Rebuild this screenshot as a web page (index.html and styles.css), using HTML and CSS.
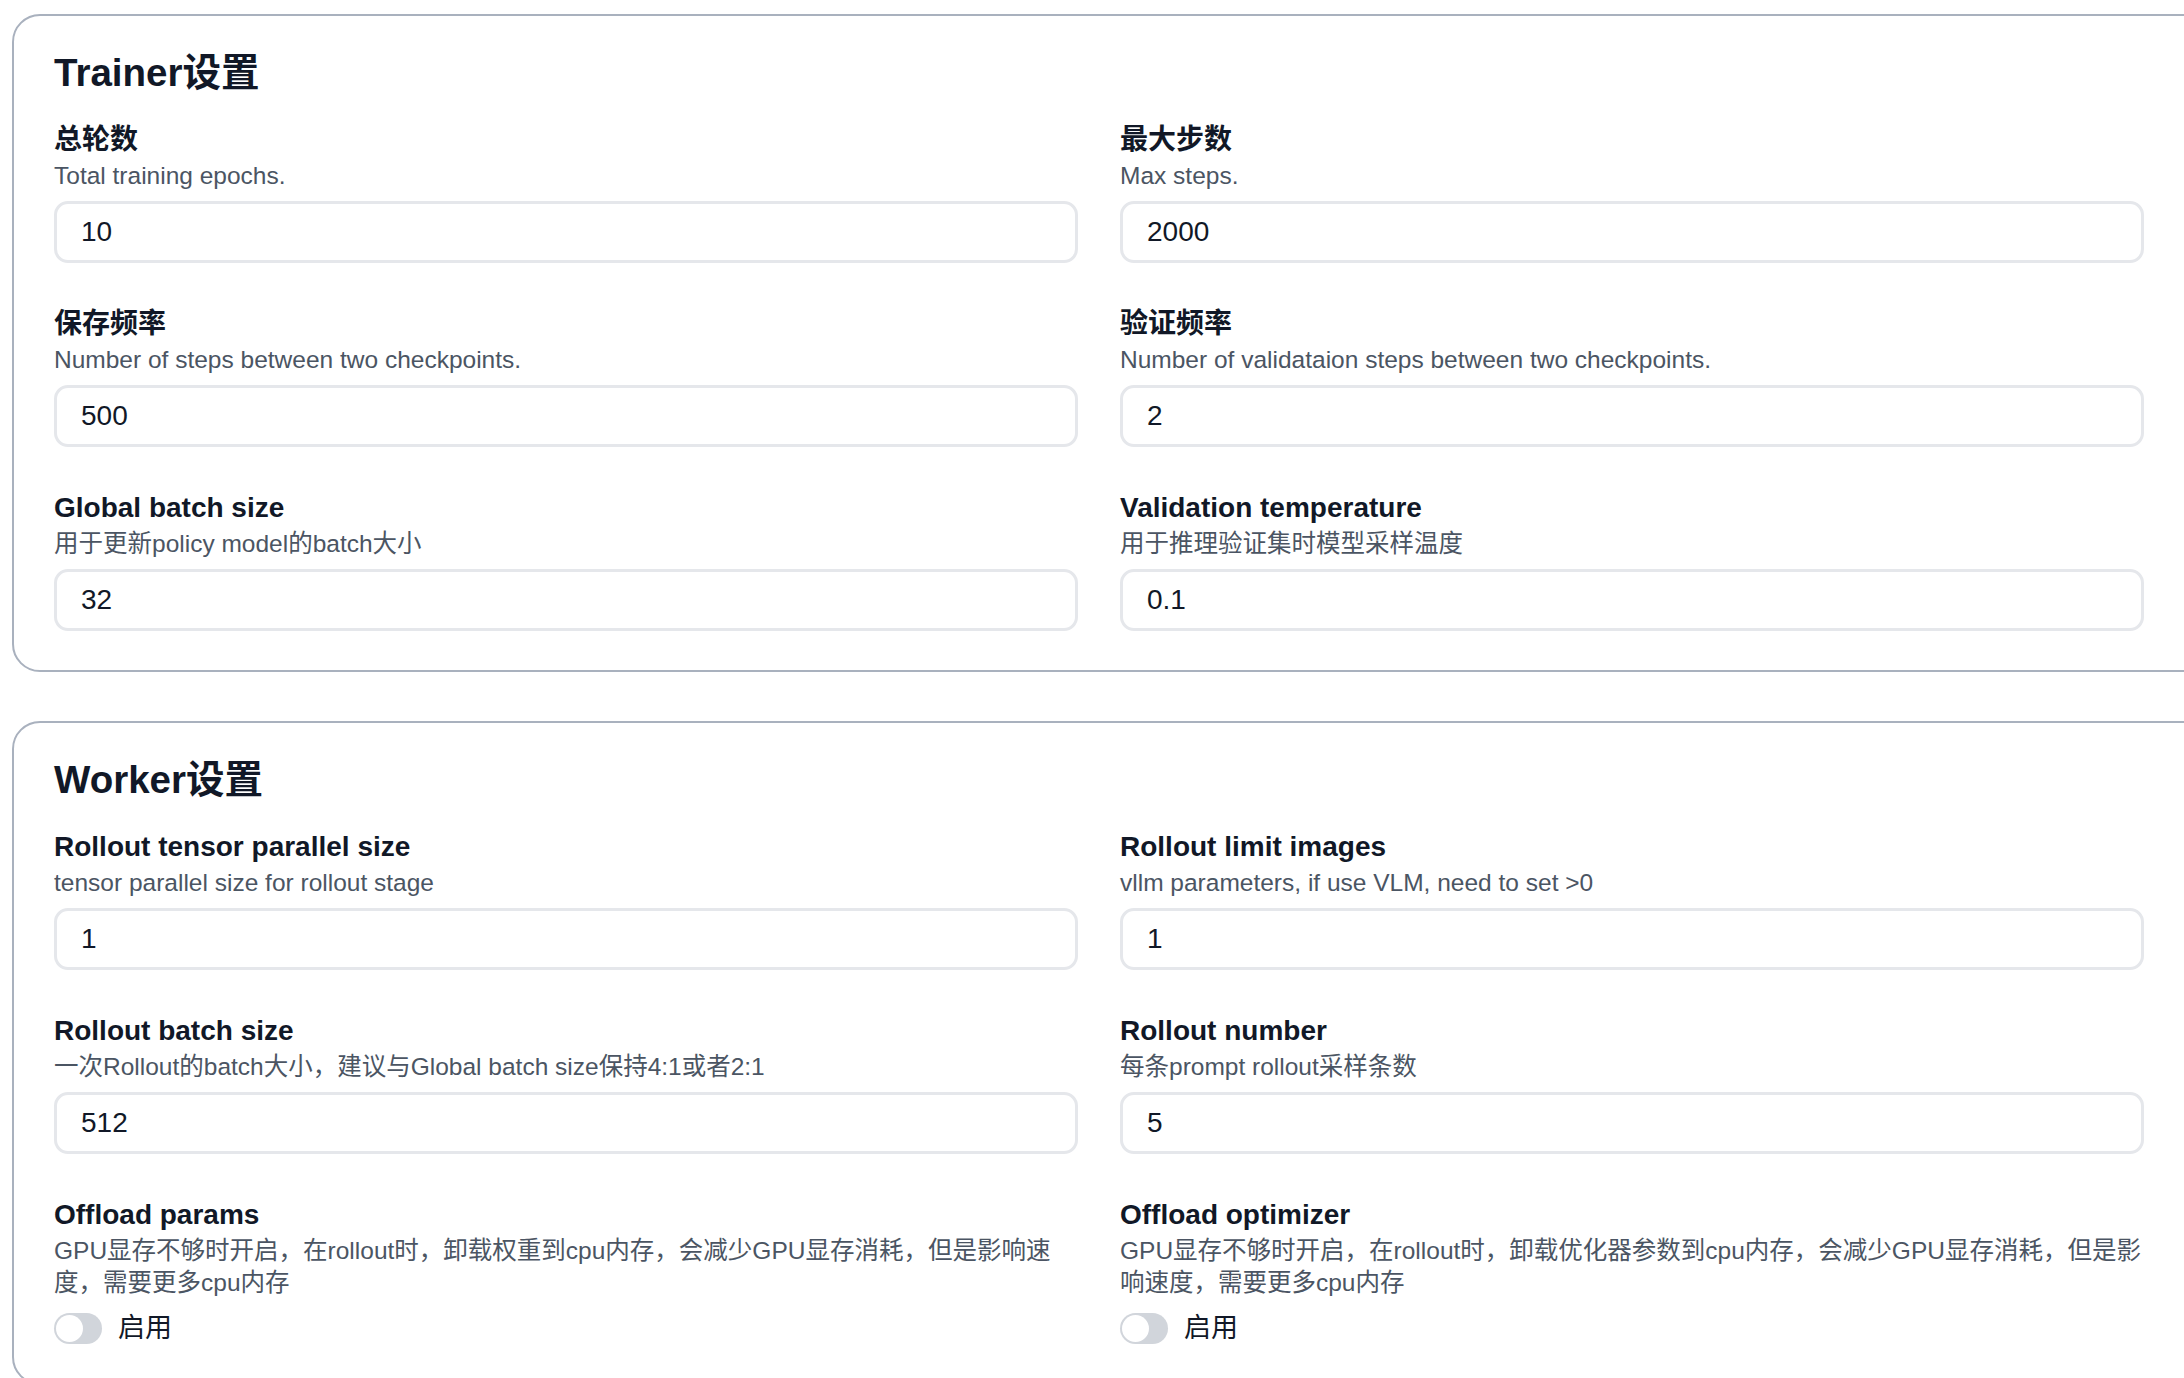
FILE: index.html
```html
<!DOCTYPE html>
<html lang="zh-CN">
<head>
<meta charset="UTF-8">
<meta name="viewport" content="width=device-width, initial-scale=1.0">
<title>训练配置</title>
<link rel="stylesheet" href="styles.css">
</head>
<body>

<div class="page">

  <section class="card">
    <h2>Trainer设置</h2>
    <div class="fields">
      <div class="field">
        <div class="label">总轮数</div>
        <div class="hint">Total training epochs.</div>
        <input class="box" type="text" value="10">
      </div>
      <div class="field">
        <div class="label">最大步数</div>
        <div class="hint">Max steps.</div>
        <input class="box" type="text" value="2000">
      </div>
      <div class="field">
        <div class="label">保存频率</div>
        <div class="hint">Number of steps between two checkpoints.</div>
        <input class="box" type="text" value="500">
      </div>
      <div class="field">
        <div class="label">验证频率</div>
        <div class="hint">Number of validataion steps between two checkpoints.</div>
        <input class="box" type="text" value="2">
      </div>
      <div class="field">
        <div class="label">Global batch size</div>
        <div class="hint">用于更新policy model的batch大小</div>
        <input class="box" type="text" value="32">
      </div>
      <div class="field">
        <div class="label">Validation temperature</div>
        <div class="hint">用于推理验证集时模型采样温度</div>
        <input class="box" type="text" value="0.1">
      </div>
    </div>
  </section>

  <section class="card">
    <h2>Worker设置</h2>
    <div class="fields">
      <div class="field">
        <div class="label">Rollout tensor parallel size</div>
        <div class="hint">tensor parallel size for rollout stage</div>
        <input class="box" type="text" value="1">
      </div>
      <div class="field">
        <div class="label">Rollout limit images</div>
        <div class="hint">vllm parameters, if use VLM, need to set &gt;0</div>
        <input class="box" type="text" value="1">
      </div>
      <div class="field">
        <div class="label">Rollout batch size</div>
        <div class="hint">一次Rollout的batch大小，建议与Global batch size保持4:1或者2:1</div>
        <input class="box" type="text" value="512">
      </div>
      <div class="field">
        <div class="label">Rollout number</div>
        <div class="hint">每条prompt rollout采样条数</div>
        <input class="box" type="text" value="5">
      </div>
      <div class="field">
        <div class="label">Offload params</div>
        <div class="hint">GPU显存不够时开启，在rollout时，卸载权重到cpu内存，会减少GPU显存消耗，但是影响速度，需要更多cpu内存</div>
        <label class="toggle"><input type="checkbox" hidden><span class="switch"></span>启用</label>
      </div>
      <div class="field">
        <div class="label">Offload optimizer</div>
        <div class="hint">GPU显存不够时开启，在rollout时，卸载优化器参数到cpu内存，会减少GPU显存消耗，但是影响速度，需要更多cpu内存</div>
        <label class="toggle"><input type="checkbox" hidden><span class="switch"></span>启用</label>
      </div>
    </div>
  </section>

</div>

</body>
</html>
```

FILE: styles.css
```css
:root {
  --text:#111827; --muted:#4b5563; --line:#a9b1be; --field:#e5e7eb; --off:#d1d5db;
}
html,body{overflow:hidden}
body{margin:0;background:#fff;color:var(--text);font-family:"Liberation Sans","Noto Sans CJK SC",sans-serif}
.page{padding:14px 0 0 12px}
.card{width:2170px;border:2px solid var(--line);border-radius:28px;padding:34px 40px 39px;margin-bottom:49px}
h2{margin:0 0 26px;font-size:38.5px;line-height:46px;font-weight:700}
.fields{display:grid;grid-template-columns:1024px 1024px;column-gap:42px;row-gap:43px}
.label{font-size:28px;line-height:36px;font-weight:700}
.hint{margin-top:2px;font-size:24.5px;line-height:32px;color:var(--muted)}
.box{display:block;width:100%;box-sizing:border-box;height:62px;margin-top:9px;padding:0 24px;border:3.5px solid var(--field);border-radius:14px;font:28px "Liberation Sans",sans-serif;color:var(--text);background:#fff;outline:none}
.toggle{display:flex;align-items:center;gap:16px;margin-top:13.5px;font-size:27px;line-height:31px}
.switch{position:relative;width:48px;height:31px;border-radius:16px;background:var(--off)}
.switch::after{content:"";position:absolute;left:2px;top:2px;width:27px;height:27px;border-radius:50%;background:#fff}
```
